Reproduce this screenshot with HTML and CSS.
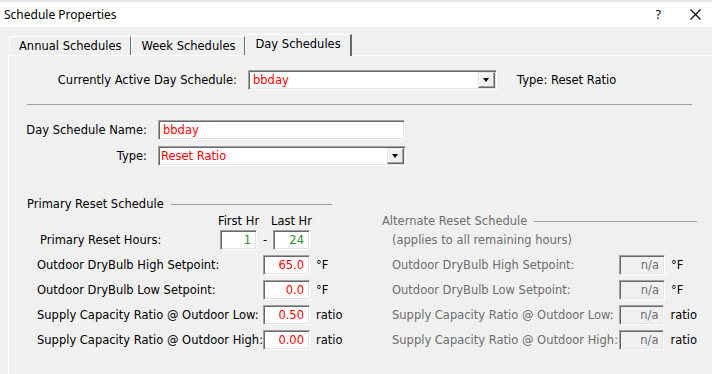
FILE: index.html
```html
<!DOCTYPE html>
<html lang="en">
<head>
    <meta charset="UTF-8">
    <title>Schedule Properties</title>
    <link rel="stylesheet" href="styles.css">
</head>
<body>
    <div class="strip"></div>
    <div class="titlebar">
        <span class="title">Schedule Properties</span>
        <span class="help">?</span>
        <svg class="close" width="11" height="11" viewBox="0 0 11 11">
            <path d="M0.5 0.5 L10.5 10.5 M10.5 0.5 L0.5 10.5" stroke="#000" stroke-width="1.1" fill="none"/>
        </svg>
    </div>

    <div class="tabs">
        <div class="tab">Annual Schedules</div>
        <div class="tab">Week Schedules</div>
        <div class="tab active">Day Schedules</div>
    </div>

    <div class="panel">
        <div class="row active-row">
            <span class="lbl lbl-active">Currently Active Day Schedule:</span>
            <div class="box combo combo-active"><span class="val">bbday</span><span class="drop"></span></div>
            <span class="type-note">Type: Reset Ratio</span>
        </div>

        <div class="sep"></div>

        <div class="row name-row">
            <span class="lbl lbl-name">Day Schedule Name:</span>
            <div class="box text-name"><span class="val">bbday</span></div>
        </div>
        <div class="row type-row">
            <span class="lbl lbl-name">Type:</span>
            <div class="box combo combo-type"><span class="val tight">Reset Ratio</span><span class="drop"></span></div>
        </div>

        <div class="group-title primary-title">
            <span>Primary Reset Schedule</span>
            <div class="group-line"></div>
        </div>

        <div class="reset-grid">
            <div class="column primary">
                <div class="head-row">
                    <span class="hr-head">First Hr</span>
                    <span class="dash"></span>
                    <span class="hr-head">Last Hr</span>
                </div>
                <div class="row hours-row">
                    <span class="lbl lbl-hours">Primary Reset Hours:</span>
                    <div class="box num hr-box green">1</div>
                    <span class="dash">-</span>
                    <div class="box num hr-box green">24</div>
                </div>
                <div class="row value-row">
                    <span class="lbl lbl-value">Outdoor DryBulb High Setpoint:</span>
                    <div class="box num value-box">65.0</div>
                    <span class="unit">°F</span>
                </div>
                <div class="row value-row">
                    <span class="lbl lbl-value">Outdoor DryBulb Low Setpoint:</span>
                    <div class="box num value-box">0.0</div>
                    <span class="unit">°F</span>
                </div>
                <div class="row value-row">
                    <span class="lbl lbl-value">Supply Capacity Ratio @ Outdoor Low:</span>
                    <div class="box num value-box">0.50</div>
                    <span class="unit">ratio</span>
                </div>
                <div class="row value-row">
                    <span class="lbl lbl-value">Supply Capacity Ratio @ Outdoor High:</span>
                    <div class="box num value-box">0.00</div>
                    <span class="unit">ratio</span>
                </div>
            </div>

            <div class="column alternate">
                <div class="group-title head-row">
                    <span>Alternate Reset Schedule</span>
                    <div class="group-line"></div>
                </div>
                <div class="row hours-row">
                    <span class="applies">(applies to all remaining hours)</span>
                </div>
                <div class="row value-row">
                    <span class="lbl lbl-alt">Outdoor DryBulb High Setpoint:</span>
                    <div class="box num alt-box">n/a</div>
                    <span class="unit">°F</span>
                </div>
                <div class="row value-row">
                    <span class="lbl lbl-alt">Outdoor DryBulb Low Setpoint:</span>
                    <div class="box num alt-box">n/a</div>
                    <span class="unit">°F</span>
                </div>
                <div class="row value-row">
                    <span class="lbl lbl-alt">Supply Capacity Ratio @ Outdoor Low:</span>
                    <div class="box num alt-box">n/a</div>
                    <span class="unit">ratio</span>
                </div>
                <div class="row value-row">
                    <span class="lbl lbl-alt">Supply Capacity Ratio @ Outdoor High:</span>
                    <div class="box num alt-box">n/a</div>
                    <span class="unit">ratio</span>
                </div>
            </div>
        </div>
    </div>
</body>
</html>
```

FILE: styles.css
```css
html, body {
    height: 100%;
}
body {
    margin: 0;
    display: flex;
    flex-direction: column;
    background-color: #f0f0f0;
    font-family: "DejaVu Sans", sans-serif;
    font-size: 11.5px;
    color: #000;
    overflow: hidden;
}
.strip {
    height: 2px;
    background: #e4e4e4;
}
.titlebar {
    height: 25px;
    background: #fff;
    display: flex;
    align-items: center;
    padding-left: 4px;
}
.title {
    font-family: "Noto Sans", sans-serif;
    font-size: 12px;
}
.help {
    margin-left: auto;
    font-family: "Noto Sans", sans-serif;
    font-size: 12px;
}
.close {
    margin: 0 11px 0 29px;
}

/* tabs */
.tabs {
    display: flex;
    align-items: flex-end;
    height: 22px;
    margin-top: 6px;
    padding-left: 9px;
}
.tab {
    height: 18px;
    line-height: 18px;
    padding: 0 9px 0 9px;
    border-top: 1px solid #fff;
    border-left: 1px solid #fff;
    border-right: 1px solid #696969;
}
.tab.active {
    position: relative;
    z-index: 1;
    height: 21px;
    line-height: 19px;
    margin-bottom: -1px;
    background: #f0f0f0;
    border-right: 2px solid #696969;
}

/* panel */
.panel {
    flex: 1;
    margin-left: 8px;
    border-top: 1px solid #fff;
    border-left: 1px solid #fff;
}
.row {
    display: flex;
    align-items: center;
    height: 20px;
}
.lbl {
    white-space: nowrap;
}
.active-row {
    margin-top: 14px;
}
.lbl-active {
    width: 228px;
    margin-right: 11px;
    text-align: right;
}
.type-note {
    margin-left: 20px;
}
.sep {
    margin: 14px 0 0 18px;
    width: 665px;
    height: 1px;
    background: #a0a0a0;
}
.name-row {
    margin-top: 15px;
}
.type-row {
    margin-top: 6px;
}
.lbl-name {
    width: 138px;
    margin-right: 11px;
    text-align: right;
}

/* sunken fields */
.box {
    box-sizing: border-box;
    height: 20px;
    line-height: 18px;
    background: #fff;
    border: 1px solid;
    border-color: #a0a0a0 #fff #fff #a0a0a0;
    box-shadow: inset 1px 1px 0 #696969, inset -1px -1px 0 #e3e3e3;
    color: #ff0000;
    white-space: nowrap;
}
.box .val {
    padding-left: 4px;
}
.box .val.tight {
    padding-left: 2px;
}
.combo {
    display: flex;
    align-items: center;
}
.combo-active { width: 249px; }
.combo-type { width: 248px; }
.text-name { width: 247px; }
.drop {
    margin-left: auto;
    margin-right: 1px;
    width: 17px;
    height: 16px;
    box-sizing: border-box;
    background: #f0f0f0;
    border: 1px solid;
    border-color: #e3e3e3 #696969 #696969 #e3e3e3;
    box-shadow: inset -1px -1px 0 #a0a0a0, inset 1px 1px 0 #fff;
    position: relative;
}
.drop::after {
    content: "";
    position: absolute;
    left: 4px;
    top: 5px;
    border-left: 3.5px solid transparent;
    border-right: 3.5px solid transparent;
    border-top: 4px solid #000;
}
.num {
    text-align: right;
    padding-right: 5px;
}
.green { color: #2e8b2e; }

/* reset schedules */
.group-title {
    display: flex;
    align-items: center;
    height: 14px;
}
.primary-title {
    margin: 31px 0 0 18px;
    width: 305px;
}
.group-line {
    flex: 1;
    height: 1px;
    margin-left: 7px;
    background: #a0a0a0;
}
.reset-grid {
    display: grid;
    grid-template-columns: 373px 315px;
    margin-top: 3px;
}
.column .head-row {
    height: 14px;
    margin-bottom: 2px;
}
.column .hours-row {
    margin-bottom: 5px;
}
.column .value-row {
    margin-bottom: 5px;
}
.primary .head-row {
    display: flex;
    align-items: center;
    padding-left: 208px;
}
.hr-head {
    width: 43px;
    text-align: center;
}
.primary .head-row .dash {
    width: 10px;
}
.lbl-hours {
    margin-left: 31px;
    width: 180px;
}
.hr-box { width: 37px; }
.hours-row .dash {
    width: 16px;
    text-align: center;
}
.lbl-value {
    margin-left: 28px;
    width: 226px;
}
.value-box { width: 47px; }
.unit {
    margin-left: 6px;
}

.alternate {
    color: #6d6d6d;
}
.alternate .unit {
    color: #000;
}
.applies {
    margin-left: 10px;
}
.lbl-alt {
    margin-left: 10px;
    width: 227px;
}
.alt-box {
    width: 46px;
    background: #f0f0f0;
    color: #6d6d6d;
}
```
